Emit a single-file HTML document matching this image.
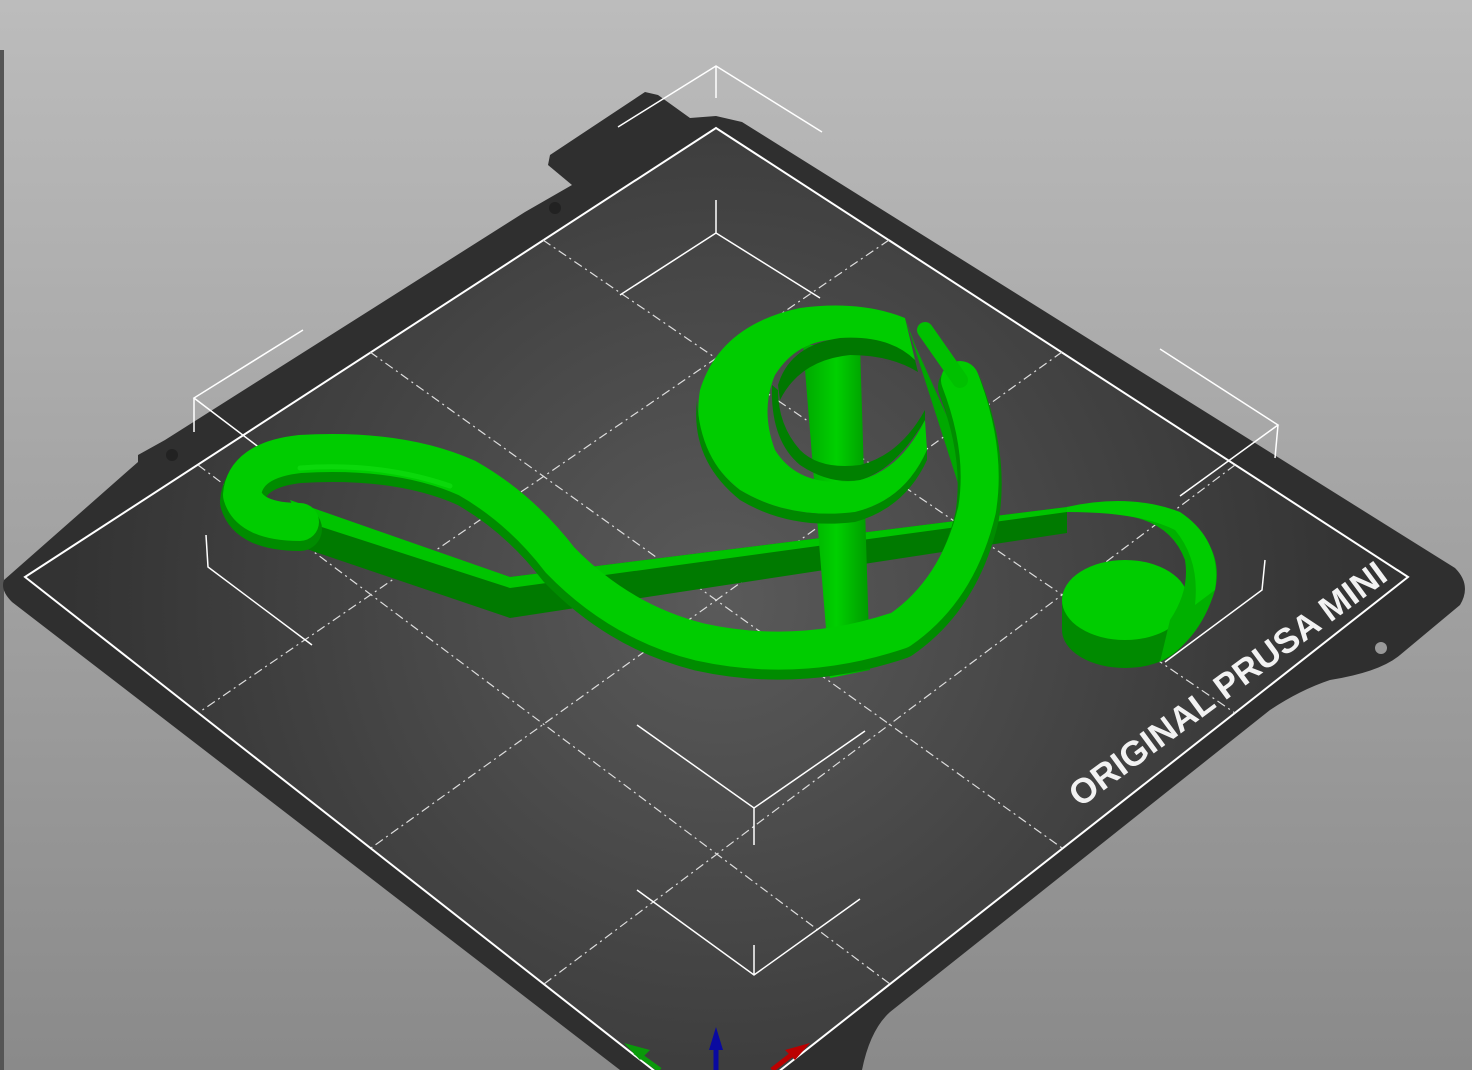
<!DOCTYPE html>
<html><head><style>
html,body{margin:0;padding:0;width:1472px;height:1070px;overflow:hidden}
body{background:linear-gradient(#bcbcbc,#8a8a8a)}
svg{position:absolute;left:0;top:0}
</style></head><body>
<svg width="1472" height="1070" viewBox="0 0 1472 1070">
<defs>
<radialGradient id="pg" cx="720" cy="600" r="650" gradientUnits="userSpaceOnUse">
<stop offset="0" stop-color="#5a5a5a"/><stop offset="1" stop-color="#333"/>
</radialGradient>
<linearGradient id="st" x1="0" x2="1" y1="0" y2="0">
<stop offset="0" stop-color="#00a800"/><stop offset="0.5" stop-color="#00d000"/><stop offset="1" stop-color="#009800"/>
</linearGradient>
</defs>
<rect x="0" y="50" width="4" height="1020" fill="#555"/>
<path d="M4,580 L138,462 L138,455 L165,440 L525,212 L572,185 L548,165 L550,155 L645,92 L658,95 L690,118 L716,116 L742,122 L1455,568 Q1472,585 1460,605 L1400,655 Q1380,672 1330,680 Q1300,690 1270,710 L890,1012 Q870,1030 862,1070 L620,1070 L12,602 Q0,590 4,580 Z" fill="#2f2f2f"/>
<path d="M25,577 L716,128 L1408,577 L717,1120 Z" fill="url(#pg)" stroke="#fff" stroke-width="2"/>
<circle cx="1381" cy="648" r="6" fill="#999"/>
<circle cx="555" cy="208" r="6" fill="#222"/>
<circle cx="172" cy="455" r="6" fill="#222"/>
<g stroke="#ddd" stroke-width="1.2" stroke-dasharray="9,4,2,4" fill="none">
<line x1="889" y1="240" x2="198" y2="713"/>
<line x1="1062" y1="352" x2="371" y2="848"/>
<line x1="1235" y1="465" x2="544" y2="984"/>
<line x1="543" y1="240" x2="1235" y2="713"/>
<line x1="370" y1="352" x2="1062" y2="848"/>
<line x1="198" y1="465" x2="890" y2="984"/>
</g>
<g stroke="#fff" stroke-width="1.5" fill="none">
<path d="M618,127 L716,66 L822,132 M716,66 L716,98"/>
<path d="M620,295 L716,233 L820,298 M716,233 L716,200"/>
<path d="M303,330 L194,398 L298,477 M194,398 L194,432"/>
<path d="M1160,349 L1278,425 L1180,496 M1278,425 L1275,458"/>
<path d="M312,645 L208,567 L206,535"/>
<path d="M1165,662 L1262,590 L1265,560"/>
<path d="M637,725 L754,808 L865,731 M754,808 L754,845"/>
<path d="M637,890 L754,975 L860,899 M754,975 L754,945"/>
</g>
<path d="M716,1070 L716,1045" stroke="#0a0aa0" stroke-width="5"/>
<path d="M709,1050 L716,1027 L723,1050 Z" fill="#0a0aa0"/>
<path d="M660,1070 L635,1052" stroke="#0a9a0a" stroke-width="5"/>
<path d="M624,1043 L650,1050 L640,1060 Z" fill="#0a9a0a"/>
<path d="M772,1070 L795,1052" stroke="#b00" stroke-width="5"/>
<path d="M810,1043 L785,1050 L795,1060 Z" fill="#b00"/>
<text x="0" y="0" transform="translate(1080,808) rotate(-36.5)" font-family="Liberation Sans, sans-serif" font-weight="bold" font-size="35" fill="#f2f2f2">ORIGINAL PRUSA MINI</text>

<path d="M290,505 L510,577 L1067,507 L1067,533 L510,618 L280,540 Z" fill="#007a00"/>
<path d="M290,500 L510,577 L1067,507 L1067,512 L510,588 L300,520 Z" fill="#00c400"/>
<ellipse cx="1125" cy="630" rx="63" ry="38" fill="#008a00"/>
<rect x="1062" y="600" width="126" height="30" fill="#008a00"/>
<ellipse cx="1125" cy="600" rx="63" ry="40" fill="#00cc00"/>
<path d="M1067,507 Q1130,495 1180,515 Q1225,545 1215,590 Q1200,640 1160,662 L1170,620 Q1190,590 1185,560 Q1170,520 1120,515 Z" fill="#00b000"/>
<path d="M1067,507 Q1130,493 1180,512 Q1222,540 1215,590 L1195,605 Q1200,560 1175,530 Q1140,512 1067,512 Z" fill="#00cc00"/>
<path d="M803,345 L860,345 L870,670 L830,678 Z" fill="url(#st)"/>
<path d="M905,318 Q860,300 800,308 Q720,325 700,390 Q690,450 740,490 Q790,520 855,512 Q905,500 927,450 L925,420 Q900,470 860,480 Q800,490 775,450 Q760,410 775,375 Q800,335 850,340 Q895,345 915,360 Z" fill="#00cc00"/>
<path d="M697,400 Q690,460 740,500 Q790,530 855,522 Q905,508 927,460 L927,450 Q905,500 855,512 Q790,520 740,490 Q700,460 697,400 Z" fill="#008800"/>
<path d="M772,385 Q770,440 800,465 Q830,485 860,480 Q895,470 925,420 L925,410 Q900,455 860,465 Q820,470 800,450 Q778,425 778,390 Z" fill="#008000"/>
<path d="M778,385 Q790,345 840,338 Q890,335 915,360 L918,372 Q890,355 850,355 Q800,360 780,400 Z" fill="#007800"/>
<path d="M905,318 L915,345 L980,490 L965,505 Z" fill="#00a800"/>
<g fill="none" stroke-linecap="round" stroke-linejoin="round">
<path d="M300,522 Q250,522 242,495 Q245,460 300,454 Q400,448 467,478 Q520,508 560,560 Q620,622 700,642 Q800,664 900,630 Q958,590 977,510 Q987,450 960,380" stroke="#008c00" stroke-width="44" transform="translate(0,7)"/>
<path d="M300,522 Q250,522 242,495 Q245,460 300,454 Q400,448 467,478 Q520,508 560,560 Q620,622 700,642 Q800,664 900,630 Q958,590 977,510 Q987,450 960,380" stroke="#00cc00" stroke-width="38"/>
<path d="M960,380 L925,330" stroke="#00c000" stroke-width="16"/>
<path d="M300,468 Q380,462 450,486" stroke="#12e012" stroke-width="5" opacity="0.6"/>
</g>
</svg>
</body></html>
